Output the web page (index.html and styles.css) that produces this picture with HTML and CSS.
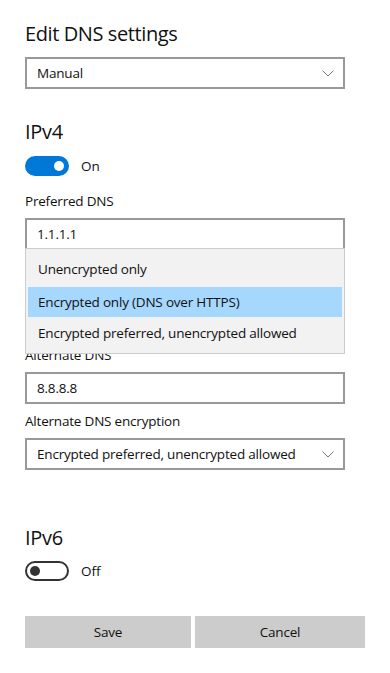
FILE: index.html
```html
<!DOCTYPE html>
<html lang="en">
<head>
<meta charset="utf-8">
<title>Edit DNS settings</title>
<link rel="stylesheet" href="styles.css">
</head>
<body>
<main class="panel">
  <h1 class="title">Edit DNS settings</h1>
  <div class="select">
    <span>Manual</span>
    <svg class="chevron" viewBox="0 0 12 7" width="12" height="7"><path d="M0.5 0.5 L6 6 L11.5 0.5" fill="none" stroke="#777" stroke-width="1"/></svg>
  </div>

  <h2 class="section">IPv4</h2>
  <div class="toggle-row">
    <span class="toggle toggle-on"><span class="knob"></span></span>
    <span class="toggle-label">On</span>
  </div>

  <div class="field">
    <div class="label">Preferred DNS</div>
    <div class="input">1.1.1.1</div>
  </div>

  <div class="field field-enc">
    <div class="label covered">Preferred DNS encryption</div>
    <div class="select covered">
      <span>Encrypted only (DNS over HTTPS)</span>
    </div>
    <ul class="menu">
      <li class="menu-item">Unencrypted only</li>
      <li class="menu-item menu-item-selected">Encrypted only (DNS over HTTPS)</li>
      <li class="menu-item">Encrypted preferred, unencrypted allowed</li>
    </ul>
  </div>

  <div class="field">
    <div class="label">Alternate DNS</div>
    <div class="input">8.8.8.8</div>
  </div>

  <div class="field">
    <div class="label">Alternate DNS encryption</div>
    <div class="select">
      <span>Encrypted preferred, unencrypted allowed</span>
      <svg class="chevron" viewBox="0 0 12 7" width="12" height="7"><path d="M0.5 0.5 L6 6 L11.5 0.5" fill="none" stroke="#777" stroke-width="1"/></svg>
    </div>
  </div>

  <h2 class="section section-v6">IPv6</h2>
  <div class="toggle-row toggle-row-v6">
    <span class="toggle toggle-off"><span class="knob"></span></span>
    <span class="toggle-label">Off</span>
  </div>

  <div class="buttons">
    <button class="btn">Save</button>
    <button class="btn">Cancel</button>
  </div>
</main>
</body>
</html>
```
FILE: styles.css
```css
* { box-sizing: border-box; }
html, body { margin: 0; padding: 0; background: #fff; }
body {
  font-family: "Open Sans", "Noto Sans", sans-serif;
  color: #111;
  width: 390px;
  height: 673px;
  overflow: hidden;
}
.panel {
  padding: 20px 0 0 25px;
  display: flex;
  flex-direction: column;
  align-items: flex-start;
}
.title {
  margin: 0;
  font-size: 20px;
  line-height: 28px;
  font-weight: 400;
  letter-spacing: -0.4px;
}
.select, .input {
  width: 320px;
  height: 32px;
  border: 2px solid #999;
  background: #fff;
  display: flex;
  align-items: center;
  justify-content: space-between;
  padding: 0 9px 0 10px;
  font-size: 13.5px;
  letter-spacing: -0.2px;
}
.title + .select { margin-top: 9px; }
.chevron { display: block; }
.section {
  margin: 29px 0 0;
  font-size: 20px;
  line-height: 28px;
  font-weight: 400;
  letter-spacing: -0.3px;
}
.section-v6 { margin-top: 54px; }
.toggle-row {
  margin-top: 10px;
  display: flex;
  align-items: center;
  gap: 12px;
  font-size: 13.5px;
}
.toggle-row-v6 { margin-top: 9px; }
.toggle {
  width: 44px;
  height: 20px;
  border-radius: 10px;
  display: flex;
  align-items: center;
  padding: 0 5px;
}
.toggle-on { background: #0078d7; justify-content: flex-end; }
.toggle-off { border: 2px solid #333; padding: 0 3px; }
.knob {
  width: 10px;
  height: 10px;
  border-radius: 50%;
}
.toggle-on .knob { background: #fff; }
.toggle-off .knob { background: #333; }
.field {
  display: flex;
  flex-direction: column;
  gap: 7px;
  margin-top: 15px;
}
.field + .field { margin-top: 7px; }
.field-enc { position: relative; margin-bottom: 22px; }
.covered { visibility: hidden; }
.label {
  font-size: 13.5px;
  line-height: 20px;
  letter-spacing: -0.2px;
}
.menu {
  position: absolute;
  left: 0;
  top: -9px;
  width: 320px;
  margin: 0;
  padding: 4px 1px;
  list-style: none;
  background: #f2f2f2;
  border: 1px solid #ccc;
  display: flex;
  flex-direction: column;
}
.menu-item {
  height: 32px;
  display: flex;
  align-items: center;
  padding-left: 11px;
  font-size: 13.5px;
  letter-spacing: -0.2px;
}
.menu-item-selected { background: #a6d8fe; margin: 2px 1px 0; height: 30px; padding-left: 10px; }
.buttons {
  margin-top: 35px;
  display: grid;
  grid-template-columns: 166px 170px;
  gap: 4px;
}
.btn {
  height: 32px;
  border: none;
  background: #ccc;
  font-family: inherit;
  font-size: 13.5px;
  letter-spacing: -0.2px;
  color: #111;
  padding: 0;
}
```
